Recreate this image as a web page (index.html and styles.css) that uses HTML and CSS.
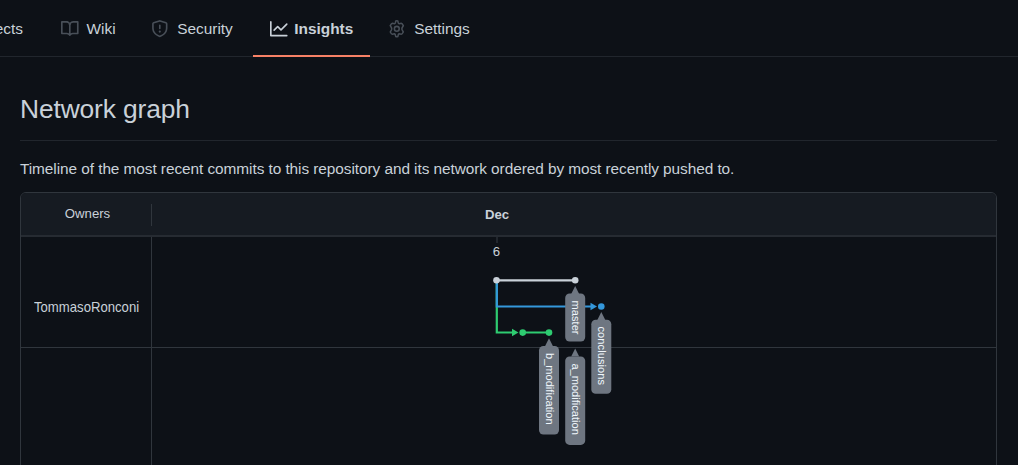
FILE: index.html
```
<!DOCTYPE html>
<html lang="en">
<head>
<meta charset="utf-8">
<title>Network graph</title>
<link rel="stylesheet" href="styles.css">
</head>
<body>
<nav class="tabs">
  <a class="tab tab-projects">Projects</a>
  <a class="tab tab-wiki"><svg class="icon" viewBox="0 0 16 16"><path fill-rule="evenodd" d="M0 1.75A.75.75 0 01.75 1h4.253c1.227 0 2.317.59 3 1.501A3.744 3.744 0 0111.006 1h4.245a.75.75 0 01.75.75v10.5a.75.75 0 01-.75.75h-4.507a2.25 2.25 0 00-1.591.659l-.622.621a.75.75 0 01-1.06 0l-.622-.621A2.25 2.25 0 005.258 13H.75a.75.75 0 01-.75-.75V1.75zm8.755 3a2.25 2.25 0 012.25-2.25H14.5v9h-3.757c-.71 0-1.4.201-1.992.572l.004-7.322zm-1.504 7.324l.004-5.073-.002-2.253A2.25 2.25 0 005.003 2.5H1.5v9h3.757a3.75 3.75 0 011.994.574z"/></svg>Wiki</a>
  <a class="tab tab-security"><svg class="icon" viewBox="0 0 16 16"><path fill-rule="evenodd" d="M7.467.133a1.75 1.75 0 011.066 0l5.25 1.68A1.75 1.75 0 0115 3.48V7c0 1.566-.32 3.182-1.303 4.682-.983 1.498-2.585 2.813-5.032 3.855a1.7 1.7 0 01-1.33 0c-2.447-1.042-4.049-2.357-5.032-3.855C1.32 10.182 1 8.566 1 7V3.48a1.75 1.75 0 011.217-1.667l5.25-1.68zm.61 1.429a.25.25 0 00-.153 0l-5.25 1.68a.25.25 0 00-.174.238V7c0 1.358.275 2.666 1.057 3.86.784 1.194 2.121 2.34 4.366 3.297a.2.2 0 00.154 0c2.245-.956 3.582-2.104 4.366-3.298C13.225 9.666 13.5 8.36 13.5 7V3.48a.25.25 0 00-.174-.237l-5.25-1.68zM9 10.5a1 1 0 11-2 0 1 1 0 012 0zm-.25-5.75a.75.75 0 10-1.5 0v3a.75.75 0 001.5 0v-3z"/></svg>Security</a>
  <a class="tab tab-insights"><svg class="icon" viewBox="0 0 16 16"><path fill-rule="evenodd" d="M1.5 1.75a.75.75 0 00-1.5 0v12.5c0 .414.336.75.75.75h14.5a.75.75 0 000-1.5H1.5V1.75zm14.28 2.53a.75.75 0 00-1.06-1.06L10 7.94 7.53 5.47a.75.75 0 00-1.06 0L3.22 8.72a.75.75 0 001.06 1.06L7 7.06l2.47 2.47a.75.75 0 001.06 0l5.25-5.25z"/></svg>Insights</a>
  <a class="tab tab-settings"><svg class="icon" viewBox="0 0 16 16"><path class="gear" d="M7.1 .9Q8 .6 8.9 .9L9.4 2.7Q9.6 3.2 10.2 3.4L12 3Q12.9 3.1 13.9 5.1L12.8 7.1Q12.5 8 12.8 8.9L13.9 10.9Q12.9 12.9 12 13L10.2 12.6Q9.6 12.8 9.4 13.3L8.9 15.1Q8 15.4 7.1 15.1L6.6 13.3Q6.4 12.8 5.8 12.6L4 13Q3.1 12.9 2.1 10.9L3.2 8.9Q3.5 8 3.2 7.1L2.1 5.1Q3.1 3.1 4 3L5.8 3.4Q6.4 3.2 6.6 2.7Z"/><circle class="gear" cx="8" cy="8" r="2.2"/></svg>Settings</a>
</nav>
<main class="page">
  <h1 class="title">Network graph</h1>
  <p class="intro">Timeline of the most recent commits to this repository and its network ordered by most recently pushed to.</p>
  <section class="network">
    <header class="network-head">
      <div class="owners-head">Owners</div>
      <div class="month">Dec</div>
    </header>
    <div class="network-body">
      <div class="owners"><div class="owner"><span class="owner-name">TommasoRonconi</span></div></div>
      <div class="timeline">
        <div class="lane"></div>
        <svg class="graph" width="844" height="228" viewBox="152 237 844 228">
          <path class="tick" d="M497 237V243"/>
          <text class="day" x="496.3" y="256">6</text>
          <path class="green" d="M496.8 280V332.5H514M522.5 332.5H549"/>
          <path class="green-fill" d="M512 328.7L518.5 332.5L512 336.3Z"/>
          <path class="blue" d="M496.8 280V306.5H592"/>
          <path class="blue-fill" d="M590.5 302.7L597 306.5L590.5 310.3Z"/>
          <path class="white" d="M496.5 280.3H575"/>
          <circle class="white-fill" cx="496.5" cy="280.3" r="3.3"/>
          <circle class="white-fill" cx="575.2" cy="280.3" r="3.3"/>
          <circle class="blue-fill" cx="601.3" cy="306.5" r="3.3"/>
          <circle class="green-fill" cx="522.7" cy="332.6" r="3.3"/>
          <circle class="green-fill" cx="549" cy="332.6" r="3.3"/>
          <g class="label" transform="translate(575.2 286)"><path d="M0 0L4 8H-4Z"/><rect x="-10" y="7.5" width="20" height="48" rx="4.4"/><text transform="translate(-2.9 14.5) rotate(90)" textLength="34">master</text></g>
          <g class="label" transform="translate(601.3 312)"><path d="M0 0L4 8H-4Z"/><rect x="-10" y="7.8" width="20" height="74" rx="4.4"/><text transform="translate(-2.9 14.5) rotate(90)" textLength="58.5">conclusions</text></g>
          <g class="label" transform="translate(549 338.2)"><path d="M0 0L4 8H-4Z"/><rect x="-10" y="7.8" width="20" height="88.5" rx="4.4"/><text transform="translate(-2.9 14.8) rotate(90)" textLength="71.5">b_modification</text></g>
          <g class="label" transform="translate(575.2 348.6)"><path d="M0 0L4 8H-4Z"/><rect x="-10" y="7.8" width="20" height="88.5" rx="4.4"/><text transform="translate(-2.9 14.8) rotate(90)" textLength="71.5">a_modification</text></g>
        </svg>
      </div>
    </div>
  </section>
</main>
</body>
</html>
```
FILE: styles.css
```
* { box-sizing: border-box; }
body {
  margin: 0;
  height: 465px;
  overflow: hidden;
  background: #0d1117;
  color: #c9d1d9;
  font: 15.4px/23px "Liberation Sans", Arial, sans-serif;
}
.tabs {
  display: flex;
  height: 57px;
  border-bottom: 1px solid #21262d;
}
.tab {
  display: flex;
  align-items: center;
  flex: none;
  height: 57px;
  border-bottom: 2px solid transparent;
  padding-top: 2px;
  white-space: nowrap;
}
.tab-projects { width: 44px; justify-content: flex-end; padding-right: 21px; }
.tab-wiki { width: 89px; padding-left: 17px; }
.tab-security { width: 120px; padding-left: 18px; }
.tab-insights {
  width: 117px;
  padding-left: 17px;
  border-bottom-color: #f78166;
  font-weight: bold;
}
.tab-settings { padding-left: 18px; }
.icon {
  width: 17.6px;
  height: 17.6px;
  margin: 1px 8px 0 0;
  flex: none;
  fill: #484f58;
}
.tab-security .icon, .tab-settings .icon { margin-right: 8.6px; }
.tab-insights .icon { margin-right: 6.7px; fill: #c9d1d9; }
.icon .gear { fill: none; stroke: #484f58; stroke-width: 1.4; }
.page { padding: 35px 21px 0 20px; }
.title {
  margin: 0;
  height: 49px;
  border-bottom: 1px solid #21262d;
  font-size: 26.4px;
  font-weight: 400;
  line-height: 34px;
  letter-spacing: -0.14px;
}
.intro { margin: 16px 0 12px; height: 23px; white-space: nowrap; letter-spacing: -0.067px; }
.network {
  border: 1px solid #30363d;
  border-radius: 6px 6px 0 0;
  overflow: hidden;
  height: 280px;
}
.network-head {
  display: flex;
  align-items: center;
  height: 44px;
  background: #161b22;
  border-bottom: 2px solid #262b32;
  font-size: 13.2px;
}
.owners-head {
  width: 131px;
  height: 22px;
  margin-top: 2px;
  line-height: 20px;
  padding-left: 3px;
  border-right: 1px solid #30363d;
  text-align: center;
}
.month { padding: 1px 0 0 333px; font-weight: bold; }
.network-body { display: flex; height: 235px; }
.owners { width: 131px; border-right: 1px solid #30363d; flex: none; }
.owner {
  height: 111px;
  padding: 59px 0 0 13px;
  border-bottom: 1px solid #30363d;
}
.owner-name {
  display: block;
  font-size: 14.6px;
  line-height: 22px;
  white-space: nowrap;
  transform: scaleX(0.9);
  transform-origin: left;
}
.timeline { flex: 1; display: grid; }
.lane, .graph { grid-area: 1 / 1; }
.lane { height: 111px; border-bottom: 1px solid #30363d; }
.graph { position: relative; }
.tick { stroke: #30363d; stroke-width: 1.2; }
.day { fill: #c9d1d9; font-size: 13.2px; text-anchor: middle; }
.green, .blue, .white { fill: none; stroke-width: 2.2; }
.green { stroke: #2ecc71; }
.blue { stroke: #3498db; }
.white { stroke: #c9d1d9; }
.green-fill { fill: #2ecc71; }
.blue-fill { fill: #3498db; }
.white-fill { fill: #c9d1d9; }
.label { fill: #6e7681; }
.label text { fill: #f0f6fc; font-size: 11px; }
```
